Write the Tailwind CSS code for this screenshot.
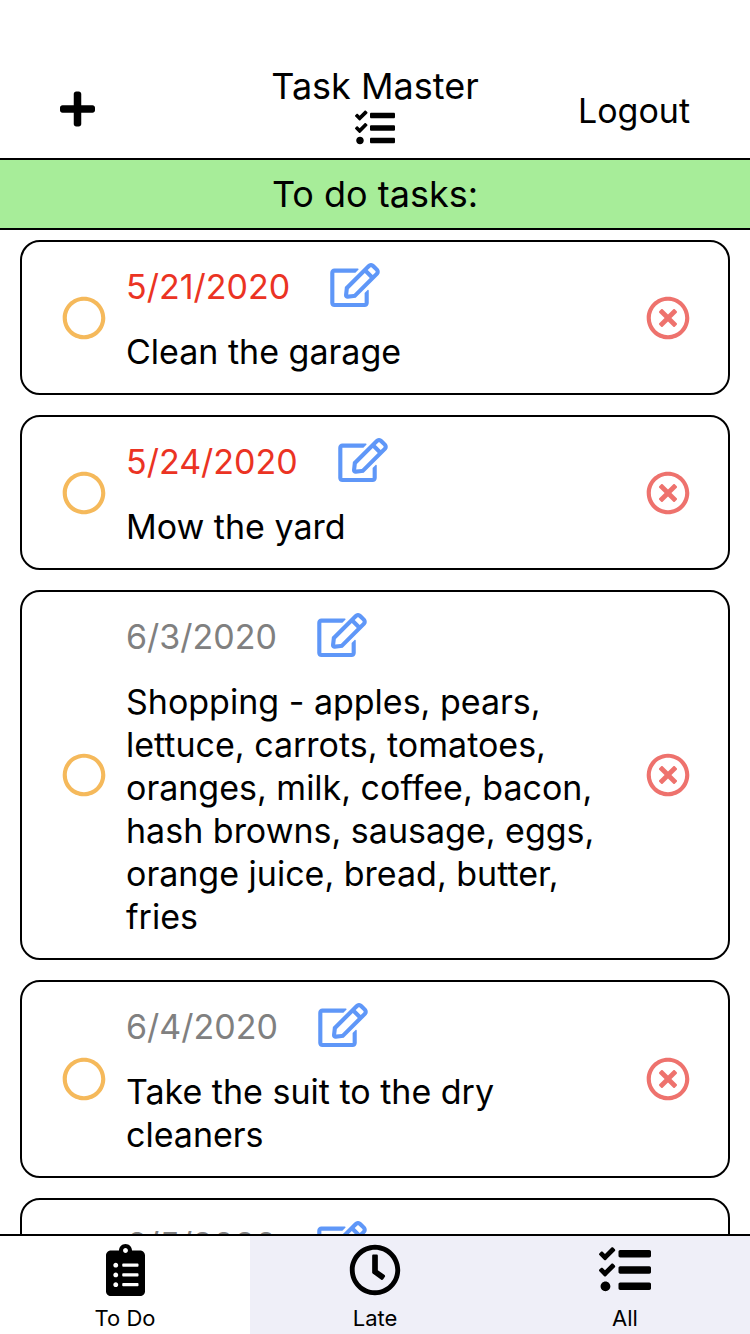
<!DOCTYPE html>
<html lang="en">
<head>
<meta charset="utf-8">
<meta name="viewport" content="width=device-width, initial-scale=1">
<title>Task Master</title>
<script src="https://cdn.jsdelivr.net/npm/@tailwindcss/browser@4"></script>
</head>
<body class="bg-white text-black font-['Inter','Liberation_Sans',sans-serif] text-[34px] leading-[43px]">
<svg class="hidden" aria-hidden="true">
  <symbol id="plus" viewBox="0 0 448 512"><path d="M416 208H272V64c0-17.67-14.33-32-32-32h-32c-17.67 0-32 14.33-32 32v144H32c-17.67 0-32 14.33-32 32v32c0 17.67 14.33 32 32 32h144v144c0 17.67 14.33 32 32 32h32c17.67 0 32-14.33 32-32V304h144c17.67 0 32-14.33 32-32v-32c0-17.67-14.33-32-32-32z"/></symbol>
  <symbol id="tasks" viewBox="0 0 512 512"><path d="M208 132h288c8.8 0 16-7.2 16-16V76c0-8.8-7.2-16-16-16H208c-8.8 0-16 7.2-16 16v40c0 8.8 7.2 16 16 16zm0 160h288c8.8 0 16-7.2 16-16v-40c0-8.8-7.2-16-16-16H208c-8.8 0-16 7.2-16 16v40c0 8.8 7.2 16 16 16zm0 160h288c8.8 0 16-7.2 16-16v-40c0-8.8-7.2-16-16-16H208c-8.8 0-16 7.2-16 16v40c0 8.8 7.2 16 16 16zM64 368c-26.5 0-48.6 21.5-48.6 48s22.1 48 48.6 48 48-21.5 48-48-21.5-48-48-48zm92.5-299l-72.2 72.2-15.6 15.6c-4.7 4.7-12.9 4.7-17.6 0L3.5 109.4c-4.7-4.7-4.7-12.3 0-17l15.7-15.7c4.7-4.7 12.3-4.7 17 0l22.7 22.1 63.7-63.3c4.7-4.7 12.3-4.7 17 0l17 16.5c4.6 4.7 4.6 12.3-.1 17zm0 159.6l-72.2 72.2-15.7 15.7c-4.7 4.7-12.9 4.7-17.6 0L3.5 269c-4.7-4.7-4.7-12.3 0-17l15.7-15.7c4.7-4.7 12.3-4.7 17 0l22.7 22.1 63.7-63.7c4.7-4.7 12.3-4.7 17 0l17 17c4.6 4.6 4.6 12.2-.1 16.9z"/></symbol>
  <symbol id="circle" viewBox="0 0 512 512"><path d="M256 8C119 8 8 119 8 256s111 248 248 248 248-111 248-248S393 8 256 8zm0 448c-110.5 0-200-89.5-200-200S145.5 56 256 56s200 89.5 200 200-89.5 200-200 200z"/></symbol>
  <symbol id="remove" viewBox="0 0 512 512"><path d="M256 8C119 8 8 119 8 256s111 248 248 248 248-111 248-248S393 8 256 8zm0 448c-110.5 0-200-89.5-200-200S145.5 56 256 56s200 89.5 200 200-89.5 200-200 200zm101.8-262.2L295.6 256l62.2 62.2c4.7 4.7 4.7 12.3 0 17l-22.6 22.6c-4.7 4.7-12.3 4.7-17 0L256 295.6l-62.2 62.2c-4.7 4.7-12.3 4.7-17 0l-22.6-22.6c-4.7-4.7-4.7-12.3 0-17l62.2-62.2-62.2-62.2c-4.7-4.7-4.7-12.3 0-17l22.6-22.6c4.7-4.7 12.3-4.7 17 0l62.2 62.2 62.2-62.2c4.7-4.7 12.3-4.7 17 0l22.6 22.6c4.7 4.7 4.7 12.3 0 17z"/></symbol>
  <symbol id="edit" viewBox="0 0 576 512"><path d="M402.3 344.9l32-32c5-5 13.7-1.5 13.7 5.7V464c0 26.5-21.5 48-48 48H48c-26.5 0-48-21.5-48-48V112c0-26.5 21.5-48 48-48h273.5c7.1 0 10.7 8.6 5.7 13.7l-32 32c-1.5 1.5-3.5 2.3-5.7 2.3H48v352h352V350.5c0-2.1.8-4.1 2.3-5.6zm156.6-201.8L296.3 405.7l-90.4 10c-26.2 2.9-48.5-19.2-45.6-45.6l10-90.4L432.9 17.1c22.9-22.9 59.9-22.9 82.7 0l43.2 43.2c22.9 22.9 22.9 60 .1 82.8zM460.1 174L402 115.9 216.2 301.8l-7.3 65.3 65.3-7.3L460.1 174zm64.8-79.7l-43.2-43.2c-4.1-4.1-10.8-4.1-14.8 0L436 82l58.1 58.1 30.9-30.9c4-4.2 4-10.8-.1-14.9z"/></symbol>
  <symbol id="clipboard" viewBox="0 0 384 512"><path d="M336 64h-80c0-35.3-28.7-64-64-64s-64 28.7-64 64H48C21.5 64 0 85.5 0 112v352c0 26.5 21.5 48 48 48h288c26.5 0 48-21.5 48-48V112c0-26.5-21.5-48-48-48zM96 424c-13.3 0-24-10.7-24-24s10.7-24 24-24 24 10.7 24 24-10.7 24-24 24zm0-96c-13.3 0-24-10.7-24-24s10.7-24 24-24 24 10.7 24 24-10.7 24-24 24zm0-96c-13.3 0-24-10.7-24-24s10.7-24 24-24 24 10.7 24 24-10.7 24-24 24zm96-192c13.3 0 24 10.7 24 24s-10.7 24-24 24-24-10.7-24-24 10.7-24 24-24zm128 368c0 4.4-3.6 8-8 8H168c-4.4 0-8-3.6-8-8v-16c0-4.4 3.6-8 8-8h144c4.4 0 8 3.6 8 8v16zm0-96c0 4.4-3.6 8-8 8H168c-4.4 0-8-3.6-8-8v-16c0-4.4 3.6-8 8-8h144c4.4 0 8 3.6 8 8v16zm0-96c0 4.4-3.6 8-8 8H168c-4.4 0-8-3.6-8-8v-16c0-4.4 3.6-8 8-8h144c4.4 0 8 3.6 8 8v16z"/></symbol>
  <symbol id="clock" viewBox="0 0 512 512"><path d="M256 8C119 8 8 119 8 256s111 248 248 248 248-111 248-248S393 8 256 8zm0 448c-110.5 0-200-89.5-200-200S145.5 56 256 56s200 89.5 200 200-89.5 200-200 200zm61.8-104.4l-84.9-61.7c-3.1-2.3-4.9-5.9-4.9-9.7V116c0-6.6 5.4-12 12-12h32c6.6 0 12 5.4 12 12v141.7l66.8 48.6c5.4 3.9 6.5 11.4 2.6 16.8L334.6 349c-3.9 5.3-11.4 6.5-16.8 2.6z"/></symbol>
</svg>
<div class="flex h-screen flex-col">
  <header class="grid grid-cols-3 items-center border-b-2 border-black px-[60px] pt-[60px]">
    <button class="justify-self-start" aria-label="Add task"><svg class="h-10 w-[35px]"><use href="#plus"/></svg></button>
    <div class="flex flex-col items-center pt-1 pb-2.5">
      <h1 class="whitespace-nowrap text-[36px] leading-[44px]">Task Master</h1>
      <svg class="size-10" aria-hidden="true"><use href="#tasks"/></svg>
    </div>
    <button class="justify-self-end pt-0.5">Logout</button>
  </header>
  <h2 class="border-b-2 border-black bg-[#a7ed99] py-3 text-center text-[36px] leading-[44px]">To do tasks:</h2>
  <main class="min-h-0 flex-1 overflow-hidden px-5 pt-2.5">
    <ul class="flex flex-col gap-5">
      <li class="flex items-center gap-5 rounded-[20px] border-2 border-black py-5 pr-[38px] pl-10">
        <button class="shrink-0 text-[#f5b95b]" aria-label="Complete Clean the garage"><svg class="size-11 fill-current"><use href="#circle"/></svg></button>
        <div class="flex min-w-0 flex-1 flex-col gap-5">
          <div class="flex h-12 items-center gap-10"><time class="text-[#eb3323]">5/21/2020</time><button class="pb-0.5 text-[#5f97f8]" aria-label="Edit Clean the garage"><svg class="h-11 w-[50px] fill-current"><use href="#edit"/></svg></button></div>
          <p>Clean the garage</p>
        </div>
        <button class="shrink-0 text-[#ee726d]" aria-label="Delete Clean the garage"><svg class="size-11 fill-current"><use href="#remove"/></svg></button>
      </li>
      <li class="flex items-center gap-5 rounded-[20px] border-2 border-black py-5 pr-[38px] pl-10">
        <button class="shrink-0 text-[#f5b95b]" aria-label="Complete Mow the yard"><svg class="size-11 fill-current"><use href="#circle"/></svg></button>
        <div class="flex min-w-0 flex-1 flex-col gap-5">
          <div class="flex h-12 items-center gap-10"><time class="text-[#eb3323]">5/24/2020</time><button class="pb-0.5 text-[#5f97f8]" aria-label="Edit Mow the yard"><svg class="h-11 w-[50px] fill-current"><use href="#edit"/></svg></button></div>
          <p>Mow the yard</p>
        </div>
        <button class="shrink-0 text-[#ee726d]" aria-label="Delete Mow the yard"><svg class="size-11 fill-current"><use href="#remove"/></svg></button>
      </li>
      <li class="flex items-center gap-5 rounded-[20px] border-2 border-black py-5 pr-[38px] pl-10">
        <button class="shrink-0 text-[#f5b95b]" aria-label="Complete Shopping"><svg class="size-11 fill-current"><use href="#circle"/></svg></button>
        <div class="flex min-w-0 flex-1 flex-col gap-5">
          <div class="flex h-12 items-center gap-10"><time class="text-[#808080]">6/3/2020</time><button class="pb-0.5 text-[#5f97f8]" aria-label="Edit Shopping"><svg class="h-11 w-[50px] fill-current"><use href="#edit"/></svg></button></div>
          <p>Shopping - apples, pears, lettuce, carrots, tomatoes, oranges, milk, coffee, bacon, hash browns, sausage, eggs, orange juice, bread, butter, fries</p>
        </div>
        <button class="shrink-0 text-[#ee726d]" aria-label="Delete Shopping"><svg class="size-11 fill-current"><use href="#remove"/></svg></button>
      </li>
      <li class="flex items-center gap-5 rounded-[20px] border-2 border-black py-5 pr-[38px] pl-10">
        <button class="shrink-0 text-[#f5b95b]" aria-label="Complete Take the suit to the dry cleaners"><svg class="size-11 fill-current"><use href="#circle"/></svg></button>
        <div class="flex min-w-0 flex-1 flex-col gap-5">
          <div class="flex h-12 items-center gap-10"><time class="text-[#808080]">6/4/2020</time><button class="pb-0.5 text-[#5f97f8]" aria-label="Edit Take the suit to the dry cleaners"><svg class="h-11 w-[50px] fill-current"><use href="#edit"/></svg></button></div>
          <p>Take the suit to the dry cleaners</p>
        </div>
        <button class="shrink-0 text-[#ee726d]" aria-label="Delete Take the suit to the dry cleaners"><svg class="size-11 fill-current"><use href="#remove"/></svg></button>
      </li>
      <li class="flex min-h-[155px] rounded-[20px] border-2 border-black py-5 pr-[38px] pl-[104px]">
        <div class="flex h-12 items-center gap-10"><time class="text-[#808080]">6/5/2020</time><button class="pb-0.5 text-[#5f97f8]" aria-label="Edit task"><svg class="h-11 w-[50px] fill-current"><use href="#edit"/></svg></button></div>
      </li>
    </ul>
  </main>
  <nav class="grid grid-cols-3 border-t-2 border-black text-[22px] leading-7">
    <a href="#todo" aria-current="page" class="flex flex-col items-center gap-2 bg-white pt-2 pb-0.5"><svg class="h-[52px] w-[39px]" aria-hidden="true"><use href="#clipboard"/></svg><span>To Do</span></a>
    <a href="#late" class="flex flex-col items-center gap-2 bg-[#efeff8] pt-2 pb-0.5"><svg class="size-[52px]" aria-hidden="true"><use href="#clock"/></svg><span>Late</span></a>
    <a href="#all" class="flex flex-col items-center gap-2 bg-[#efeff8] pt-2 pb-0.5"><svg class="size-[52px]" aria-hidden="true"><use href="#tasks"/></svg><span>All</span></a>
  </nav>
</div>
</body>
</html>
